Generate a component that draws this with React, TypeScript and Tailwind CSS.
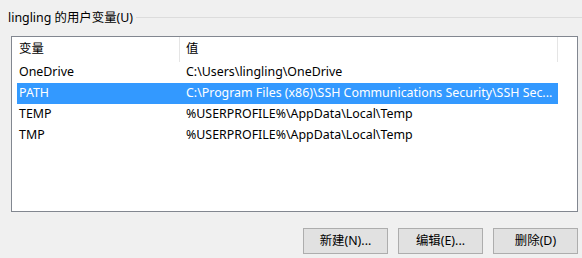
const rows = [
  { name: "OneDrive", value: "C:\\Users\\lingling\\OneDrive" },
  { name: "PATH", value: "C:\\Program Files (x86)\\SSH Communications Security\\SSH Sec...", selected: true },
  { name: "TEMP", value: "%USERPROFILE%\\AppData\\Local\\Temp" },
  { name: "TMP", value: "%USERPROFILE%\\AppData\\Local\\Temp" },
]

export default function App() {
  return (
    <div
      className="w-[582px] h-[258px] bg-[#f0f0f0] text-[12.4px] text-black overflow-hidden"
      style={{ fontFamily: '"Noto Sans", "Noto Sans CJK SC", sans-serif' }}
    >
      <div className="flex items-center pl-2 pt-[8px] h-[27px]">
        <span className="leading-[18px]">lingling 的用户变量(U)</span>
        <div className="flex-1 ml-[3px] border-t border-[#dcdcdc]" />
      </div>

      <div className="ml-[11px] mt-[9px] w-[567px] h-[176px] border border-[#828790] bg-white">
        <div className="flex h-[25px] items-center">
          <div className="w-[168px] h-full flex items-center pl-[7px] border-r border-[#e5e5e5]">变量</div>
          <div className="w-[378px] h-full flex items-center pl-[6px] border-r border-[#e5e5e5]">值</div>
        </div>
        <div className="pl-[5px]">
          {rows.map((r) => (
            <div
              key={r.name}
              className={`flex h-[21px] items-center w-[541px] ${r.selected ? "bg-[#3399ff] text-white" : ""}`}
            >
              <div className="w-[169px] pl-[2px] whitespace-nowrap">{r.name}</div>
              <div className="flex-1 whitespace-nowrap overflow-hidden">{r.value}</div>
            </div>
          ))}
        </div>
      </div>

      <div className="flex justify-end gap-[10px] pr-[4px] mt-[16px]">
        {["新建(N)...", "编辑(E)...", "删除(D)"].map((b) => (
          <div
            key={b}
            className="w-[85px] h-[26px] flex items-center justify-center bg-[#e1e1e1] border border-[#adadad]"
          >
            {b}
          </div>
        ))}
      </div>
    </div>
  )
}
